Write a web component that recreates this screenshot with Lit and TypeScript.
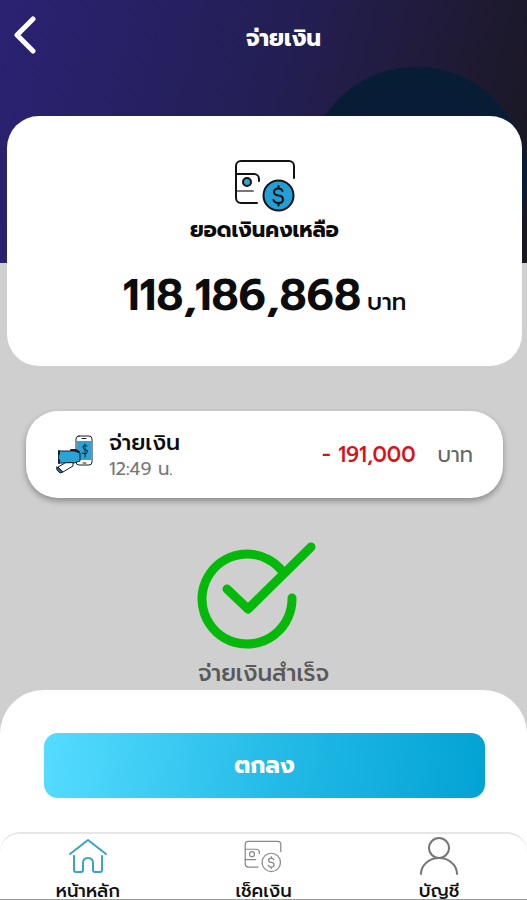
import { LitElement, html, css, svg } from "lit";
import { customElement } from "lit/decorators.js";

const walletLines = svg`
  <path d="M60 20V8a5 5 0 0 0-5-5H7a5 5 0 0 0-5 5v32a5 5 0 0 0 5 5h16" />
  <path d="M2 16h18a5 5 0 0 1 5 5v2" />`;

const walletFold = svg`<path d="M2 33h17" />`;

const dollar = svg`
  <path d="M48.500 33q-1-2.500-4-2.500q-4.500 0-4.500 3.500q0 3 4.500 3.500q4.500.5 4.500 4q0 3.500-4.500 3.500q-4 0-5-3M44.500 28v2.500M44.500 45v2.500" />`;

@customElement("app-root")
export class AppRoot extends LitElement {
  static styles = css`
    :host {
      display: block;
      font-family: Prompt, Kanit, "Noto Sans Thai", Inter, "Noto Sans", sans-serif;
      color: #0c0c0c;
    }
    * {
      box-sizing: border-box;
    }
    svg {
      display: block;
      fill: none;
      stroke-linecap: round;
      stroke-linejoin: round;
    }
    h1,
    h2,
    p {
      margin: 0;
    }
    .page {
      min-height: 100vh;
      display: flex;
      flex-direction: column;
      background:
        radial-gradient(circle at 79% 178px, #081b3a 0, #071c35 110px, transparent 112px) top / 100% 263px no-repeat,
        linear-gradient(105deg, #2b2273 0%, #231f55 48%, #211b3c 72%, #19171f 100%) top / 100% 263px no-repeat,
        #cfcfcf;
    }
    .bar {
      display: grid;
      grid-template-columns: 48px 1fr;
      align-items: center;
      height: 78px;
      padding-right: 8px;
      color: #fff;
    }
    .back {
      border: 0;
      padding: 0 0 8px 12px;
      background: none;
      color: inherit;
      stroke: currentColor;
    }
    .title {
      text-align: center;
      font-size: 23px;
      line-height: 32px;
      font-weight: 700;
    }
    .balance {
      margin: 38px 5px 0 7px;
      height: 250px;
      padding-top: 42px;
      border-radius: 32px;
      background: #fff;
      display: flex;
      flex-direction: column;
      align-items: center;
    }
    .wallet {
      stroke: #111;
      stroke-width: 2;
    }
    .fold {
      stroke: #777;
    }
    .label {
      margin-top: 2px;
      font-size: 21px;
      line-height: 32px;
      font-weight: 700;
    }
    .amount {
      display: flex;
      align-items: baseline;
      gap: 6px;
      margin-top: 20px;
      font-size: 44px;
      line-height: 60px;
      font-weight: 600;
    }
    .amount small {
      font-size: 23px;
      font-weight: 500;
    }
    .entry {
      display: flex;
      align-items: center;
      margin: 45px 24px 0 26px;
      height: 87px;
      padding: 0 30px;
      border-radius: 32px;
      background: #fff;
      box-shadow: 0 3px 6px #0005;
    }
    .what {
      flex: 1;
      margin-left: 16px;
    }
    .name {
      font-size: 22px;
      line-height: 28px;
      font-weight: 500;
    }
    .time {
      font-size: 18px;
      line-height: 24px;
      color: #777;
    }
    .minus {
      font-size: 21px;
      font-weight: 500;
      color: #dc1016;
    }
    .unit {
      margin-left: 22px;
      font-size: 21px;
      color: #666;
    }
    .done {
      flex: 1;
      display: flex;
      flex-direction: column;
      align-items: center;
      padding-top: 44px;
      font-size: 23px;
      line-height: 32px;
      font-weight: 500;
      color: #595959;
    }
    .tick {
      margin-bottom: 8px;
      stroke: #05b90b;
      stroke-width: 9;
    }
    .sheet {
      padding: 43px 42px 34px 44px;
      border-radius: 44px 44px 0 0;
      background: #fff;
    }
    .ok {
      width: 100%;
      height: 65px;
      border: 0;
      border-radius: 14px;
      background: linear-gradient(95deg, #55dcff, #22b9e6 55%, #02a3d4);
      color: #fff;
      font: inherit;
      font-size: 23px;
      font-weight: 700;
    }
    .nav {
      display: grid;
      grid-template-columns: repeat(3, 1fr);
      height: 68px;
      border-top: 2px solid #e6e6e6;
      border-bottom: 1px solid #999;
      border-radius: 20px 20px 0 0;
      background: #fff;
    }
    .under {
      background: #fff;
    }
    .tab {
      display: flex;
      flex-direction: column;
      align-items: center;
      padding-top: 3px;
      color: #111;
      text-decoration: none;
      font-size: 18px;
      line-height: 20px;
      font-weight: 500;
    }
    .tab svg {
      margin-bottom: 6px;
      flex: none;
    }
    .home {
      stroke: #3aa3c8;
      stroke-width: 2;
    }
    .check {
      stroke: #888;
      stroke-width: 2;
    }
    .user {
      stroke: #777;
      stroke-width: 2;
    }
  `;

  render() {
    return html`
      <div class="page">
        <header class="bar">
          <button class="back" aria-label="ย้อนกลับ">
            <svg width="26" height="38" viewBox="0 0 26 38" stroke-width="5"><path d="M21 3L5 19l16 16" /></svg>
          </button>
          <h1 class="title">จ่ายเงิน</h1>
        </header>

        <section class="balance">
          <svg class="wallet" width="62" height="54" viewBox="0 0 62 54">
            <g class="fold">${walletFold}</g>
            ${walletLines}
            <circle cx="13" cy="24" r="4" fill="#2ca6d8" />
            <circle cx="44.500" cy="37.500" r="15" fill="#239fd6" />
            ${dollar}
          </svg>
          <h2 class="label">ยอดเงินคงเหลือ</h2>
          <p class="amount">118,186,868<small>บาท</small></p>
        </section>

        <section class="entry">
          <svg width="37" height="39" viewBox="0 0 37 39" stroke="#17202a" stroke-width="1">
            <rect x="20" y="1" width="16" height="29" rx="3" fill="#fff" />
            <path d="M21 6h14v19H21z" fill="#2ba3d6" stroke="none" />
            <path d="M26 3.500h4M27 28h3M31 11q-4-2-4 1t3 3t0 4l-4-1M29 9v13" />
            <path d="M3 16h15l6 2v8l-6 2H3z" fill="#2ba3d6" />
            <path d="M3 16v3M3 25v3M15 15h5l3 2" stroke-width="2" />
            <path d="M9 28l-7 4 5 5 10-6v-3z" fill="#fff" />
            <path d="M1 32l6 5-3 1-3-3z" fill="#176fae" />
          </svg>
          <div class="what">
            <p class="name">จ่ายเงิน</p>
            <p class="time">12:49 น.</p>
          </div>
          <span class="minus">- 191,000</span>
          <span class="unit">บาท</span>
        </section>

        <section class="done">
          <svg class="tick" width="138" height="108" viewBox="16 0 138 108">
            <path d="M104 30A45 45 0 1 0 113 56" />
            <path d="M48 47l21 20 63-62" />
          </svg>
          <p>จ่ายเงินสำเร็จ</p>
        </section>

        <section class="sheet">
          <button class="ok">ตกลง</button>
        </section>

        <div class="under">
          <nav class="nav">
            <a class="tab" href="#home">
              <svg class="home" width="38" height="38" viewBox="0 0 38 38">
                <path d="M1 17L19 3l18 14M5 19v14q0 2 2 2h5q2 0 2-2v-7q0-5 5-5t5 5v7q0 2 2 2h5q2 0 2-2V19" />
              </svg>
              หน้าหลัก
            </a>
            <a class="tab" href="#check">
              <svg class="check" width="38" height="38" viewBox="0 -4 62 62">
                ${walletLines} ${walletFold}
                <circle cx="13" cy="24" r="4" />
                <circle cx="44.500" cy="37.500" r="15" />
                ${dollar}
              </svg>
              เช็คเงิน
            </a>
            <a class="tab" href="#account">
              <svg class="user" width="38" height="38" viewBox="0 0 38 38">
                <circle cx="19" cy="11" r="10" />
                <path d="M1 37a18 16 0 0 1 36 0" />
              </svg>
              บัญชี
            </a>
          </nav>
        </div>
      </div>
    `;
  }
}
